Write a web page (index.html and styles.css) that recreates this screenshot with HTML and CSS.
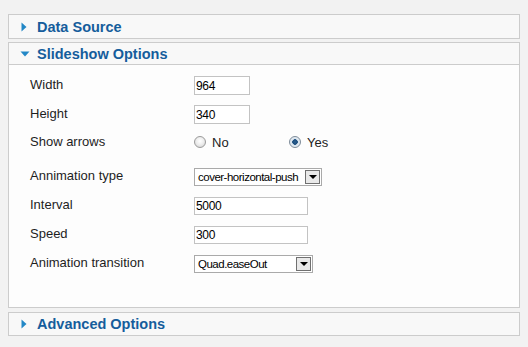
FILE: index.html
```html
<!DOCTYPE html>
<html lang="en">
<head>
    <meta charset="UTF-8">
    <title>Slideshow settings</title>
    <link rel="stylesheet" href="styles.css">
</head>
<body>
    <div class="panel first">
        <div class="panel-head">
            <svg class="arrow" width="6" height="10" viewBox="0 0 6 10"><path d="M0.5 0.5 L5.5 5 L0.5 9.5 Z" fill="#2287c6"/></svg>
            <span>Data Source</span>
        </div>
    </div>
    <div class="panel">
        <div class="panel-head open">
            <svg class="arrow down" width="10" height="6" viewBox="0 0 10 6"><path d="M0.5 0.5 L9.5 0.5 L5 5.5 Z" fill="#2287c6"/></svg>
            <span>Slideshow Options</span>
        </div>
        <div class="panel-body">
            <div class="row">
                <label>Width</label>
                <input class="txt short" type="text" value="964">
            </div>
            <div class="row">
                <label>Height</label>
                <input class="txt short" type="text" value="340">
            </div>
            <div class="row radios">
                <label>Show arrows</label>
                <div class="choice no"><input type="radio" name="arrows"><span>No</span></div>
                <div class="choice"><input type="radio" name="arrows" checked><span>Yes</span></div>
            </div>
            <div class="row">
                <label>Annimation type</label>
                <div class="sel w128"><span class="val">cover-horizontal-push</span><span class="btn"><i></i></span></div>
            </div>
            <div class="row">
                <label>Interval</label>
                <input class="txt long" type="text" value="5000">
            </div>
            <div class="row">
                <label>Speed</label>
                <input class="txt long" type="text" value="300">
            </div>
            <div class="row">
                <label>Animation transition</label>
                <div class="sel w119"><span class="val">Quad.easeOut</span><span class="btn"><i></i></span></div>
            </div>
        </div>
    </div>
    <div class="panel last">
        <div class="panel-head">
            <svg class="arrow" width="6" height="10" viewBox="0 0 6 10"><path d="M0.5 0.5 L5.5 5 L0.5 9.5 Z" fill="#2287c6"/></svg>
            <span>Advanced Options</span>
        </div>
    </div>
</body>
</html>
```
FILE: styles.css
```css
*{padding:0;margin:0;box-sizing:border-box}
body{
    background:#f2f2f2;
    padding:14px 8px 0 8px;
    font-family:"Liberation Sans",Arial,sans-serif;
    font-size:13px;
    color:#222;
}
.panel{
    width:512px;
    border:1px solid #cccccc;
    background:#f8f8f8;
    margin-bottom:4px;
}
.panel.first{margin-bottom:3px}
.panel-head{
    display:flex;
    align-items:center;
    height:22px;
    padding-left:12px;
    font-size:14.5px;
    font-weight:bold;
    color:#155d9c;
}
.panel.first .panel-head{height:23px}
.panel-head span{margin-left:10px}
.panel-head .arrow.down{margin-left:-1px;margin-top:1px}
.panel-head.open span{margin-left:7px}
.panel-head.open{border-bottom:1px solid #cccccc}
.panel-body{
    background:#fdfdfd;
    padding:6px 0 29px 21px;
}
.row{
    display:flex;
    align-items:center;
    height:29px;
}
.row.radios{height:26px;margin-bottom:7px}
.row label{
    width:164px;
    margin-top:-2px;
    color:#1e1e1e;
}
.txt{
    height:19px;
    border:1px solid #c3c3c3;
    background:#fff;
    font-family:"Liberation Sans",Arial,sans-serif;
    font-size:12px;
    letter-spacing:-0.3px;
    color:#000;
    padding:0 1px;
    outline:none;
}
.txt.short{width:56px}
.txt.long{width:114px;height:18px}
.choice{
    display:flex;
    align-items:center;
    color:#222;
}
.choice.no{width:95px}
.choice span{margin-left:6px}
.choice input{
    appearance:none;
    width:12px;
    height:12px;
    border-radius:50%;
    border:1px solid #9a9a9a;
    background:radial-gradient(circle at 50% 40%,#ffffff 0,#eeeeee 45%,#cfcfcf 100%);
}
.choice input:checked{
    border-color:#7d8b99;
    background:radial-gradient(circle,#2c5f8f 0,#1b4d7e 2.5px,#d9e4ee 3px,#eef2f6 100%);
}
.sel{
    display:flex;
    align-items:center;
    justify-content:space-between;
    height:18px;
    border:1px solid #aaaaaa;
    background:#fff;
    padding:0 1px 0 3px;
    color:#000;
    font-size:11.5px;
    letter-spacing:-0.5px;
    white-space:nowrap;
}
.sel.w128{width:128px}
.sel.w119{width:119px}
.btn{
    display:flex;
    align-items:center;
    justify-content:center;
    flex:none;
    width:15px;
    height:14px;
    border:1px solid #707070;
    background:#e9e9e9;
}
.btn i{
    width:0;
    height:0;
    border-left:4px solid transparent;
    border-right:4px solid transparent;
    border-top:4px solid #000;
    margin-top:1px;
}
```
